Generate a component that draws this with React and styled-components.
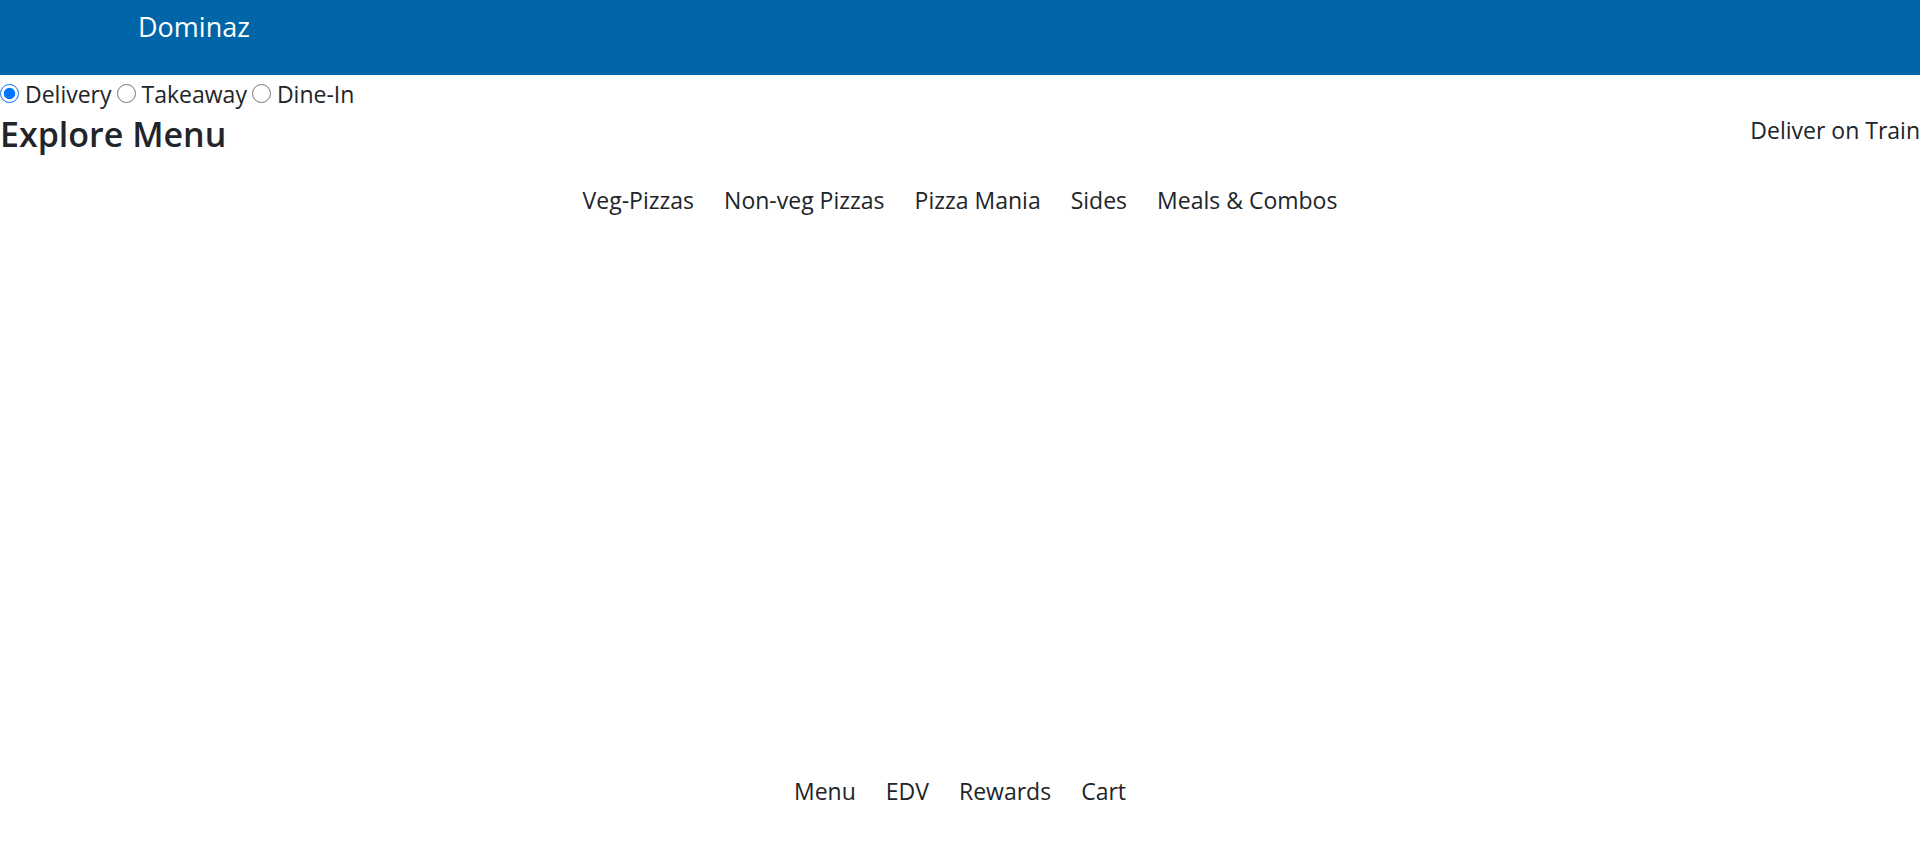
import React from "react";
import styled, { createGlobalStyle } from "styled-components";

const GlobalStyle = createGlobalStyle`
  *, *::before, *::after { box-sizing: border-box; }
  body {
    margin: 0;
    background: #fff;
    color: #212529;
    font-family: "Segoe UI", "Open Sans", "Noto Sans", sans-serif;
    font-size: 23px;
    line-height: 36px;
  }
`;

const Page = styled.div`
  display: flex;
  flex-direction: column;
  min-height: 100vh;
`;

const Header = styled.header`
  height: 75px;
  padding-left: 138px;
  background: #0066a7;
`;

const Brand = styled.a`
  display: inline-block;
  color: #fff;
  font-size: 27px;
  line-height: 54px;
  text-decoration: none;
`;

const OrderTypes = styled.form`
  display: flex;
  gap: 5px;
  padding-top: 1px;
`;

const OrderType = styled.label`
  display: flex;
  align-items: center;
  gap: 6px;
`;

const Radio = styled.input`
  width: 19px;
  height: 19px;
  margin: 0 0 2px;
`;

const MenuBar = styled.section`
  display: flex;
  justify-content: space-between;
  align-items: flex-start;
  margin-bottom: 26px;
`;

const Title = styled.h2`
  margin: 0;
  font-size: 34px;
  font-weight: 600;
  line-height: 44px;
`;

const TextLink = styled.a`
  color: inherit;
  text-decoration: none;
`;

const LinkRow = styled.nav`
  display: flex;
  justify-content: center;
  gap: 30px;
`;

const Footer = styled.footer`
  margin-top: auto;
  padding-bottom: 47px;
`;

const orderTypes = ["Delivery", "Takeaway", "Dine-In"];
const categories = ["Veg-Pizzas", "Non-veg Pizzas", "Pizza Mania", "Sides", "Meals & Combos"];
const footerLinks = ["Menu", "EDV", "Rewards", "Cart"];

function Links({ items, label }) {
  return (
    <LinkRow aria-label={label}>
      {items.map((item) => (
        <TextLink key={item} href="#">{item}</TextLink>
      ))}
    </LinkRow>
  );
}

export default function App() {
  return (
    <>
      <GlobalStyle />
      <Page>
        <Header>
          <Brand href="#">Dominaz</Brand>
        </Header>
        <main>
          <OrderTypes>
            {orderTypes.map((type, i) => (
              <OrderType key={type}>
                <Radio type="radio" name="orderType" value={type} defaultChecked={i === 0} />
                {type}
              </OrderType>
            ))}
          </OrderTypes>
          <MenuBar>
            <Title>Explore Menu</Title>
            <TextLink href="#">Deliver on Train</TextLink>
          </MenuBar>
          <Links items={categories} label="Categories" />
        </main>
        <Footer>
          <Links items={footerLinks} label="Footer" />
        </Footer>
      </Page>
    </>
  );
}
